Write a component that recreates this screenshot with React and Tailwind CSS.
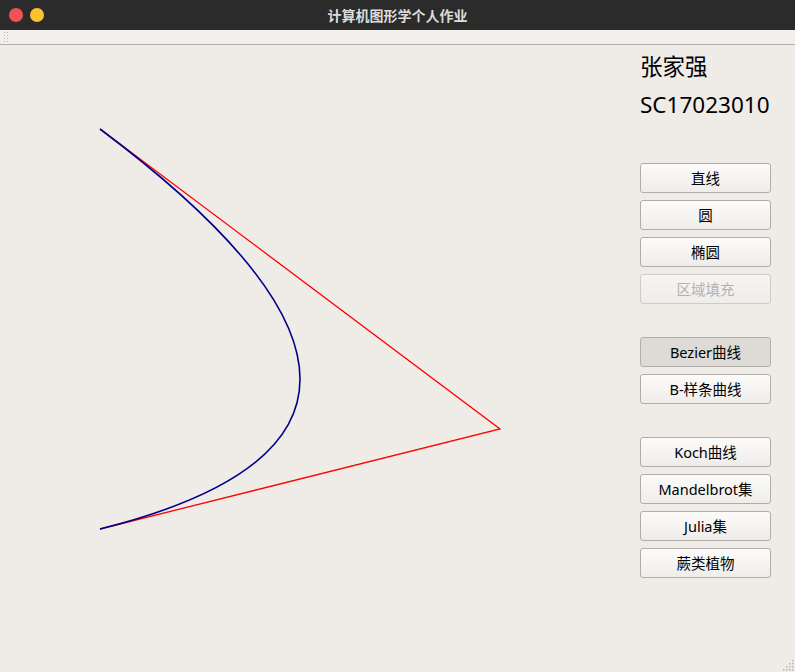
import React from 'react';

const font = { fontFamily: '"Noto Sans", "Noto Sans CJK SC", sans-serif' };

const Btn = ({ children, disabled, checked }) => (
  <button
    disabled={disabled}
    className={`h-[30px] w-[131px] rounded-[3px] border text-[14.5px] leading-none ${
      checked
        ? 'border-[#b3afab] bg-[#dedad6] text-black'
        : disabled
        ? 'border-[#cfcbc7] bg-gradient-to-b from-[#f7f5f3] to-[#efedea] text-[#b5b1ad]'
        : 'border-[#b0aca8] bg-gradient-to-b from-[#fcfbfa] to-[#efedea] text-black'
    }`}
  >
    {children}
  </button>
);

export default function App() {
  return (
    <div className="flex h-[672px] w-[795px] flex-col overflow-hidden bg-[#efebe7]" style={font}>
      {/* title bar */}
      <div className="relative flex h-[30px] items-center bg-[#2b2b2b]">
        <div className="ml-[9px] flex gap-[7px]">
          <span className="h-[14px] w-[14px] rounded-full bg-[#f1525a]" />
          <span className="h-[14px] w-[14px] rounded-full bg-[#fcc12e]" />
        </div>
        <div className="absolute inset-0 flex items-center justify-center text-[14px] font-bold text-[#dcdcdc]">
          计算机图形学个人作业
        </div>
      </div>
      {/* toolbar */}
      <div className="flex h-[15px] items-center border-b border-[#b3afab] bg-[#f2f0ec] pl-[4px]">
        <div className="grid grid-cols-2 gap-x-[2px] gap-y-[2px]">
          {Array.from({ length: 8 }).map((_, i) => (
            <span key={i} className="h-px w-px bg-[#b8b4b0]" />
          ))}
        </div>
      </div>
      {/* body */}
      <div className="relative flex flex-1">
        <div className="flex-1">
          <svg width="640" height="626" viewBox="0 0 640 626">
            <polyline points="100,84 500,384 100,484" fill="none" stroke="#ff0000" strokeWidth="1.3" />
            <path d="M100,84 Q500,384 100,484" fill="none" stroke="#00008b" strokeWidth="1.6" />
          </svg>
        </div>
        <div className="flex w-[155px] flex-col pt-[3px]">
          <div className="text-[22.5px] leading-[38px] text-black">张家强</div>
          <div className="text-[22.5px] leading-[38px] text-black">SC17023010</div>
          <div className="mt-[39px] flex flex-col gap-[7px]">
            <Btn>直线</Btn>
            <Btn>圆</Btn>
            <Btn>椭圆</Btn>
            <Btn disabled>区域填充</Btn>
          </div>
          <div className="mt-[33px] flex flex-col gap-[7px]">
            <Btn checked>Bezier曲线</Btn>
            <Btn>B-样条曲线</Btn>
          </div>
          <div className="mt-[33px] flex flex-col gap-[7px]">
            <Btn>Koch曲线</Btn>
            <Btn>Mandelbrot集</Btn>
            <Btn>Julia集</Btn>
            <Btn>蕨类植物</Btn>
          </div>
        </div>
        <svg className="absolute bottom-[1px] right-[1px]" width="12" height="12" viewBox="0 0 12 12">
          {[[10, 1], [7, 4], [10, 4], [4, 7], [7, 7], [10, 7], [1, 10], [4, 10], [7, 10], [10, 10]].map(([x, y], i) => (
            <rect key={i} x={x} y={y} width="1.5" height="1.5" fill="#b8b4b0" />
          ))}
        </svg>
      </div>
    </div>
  );
}
